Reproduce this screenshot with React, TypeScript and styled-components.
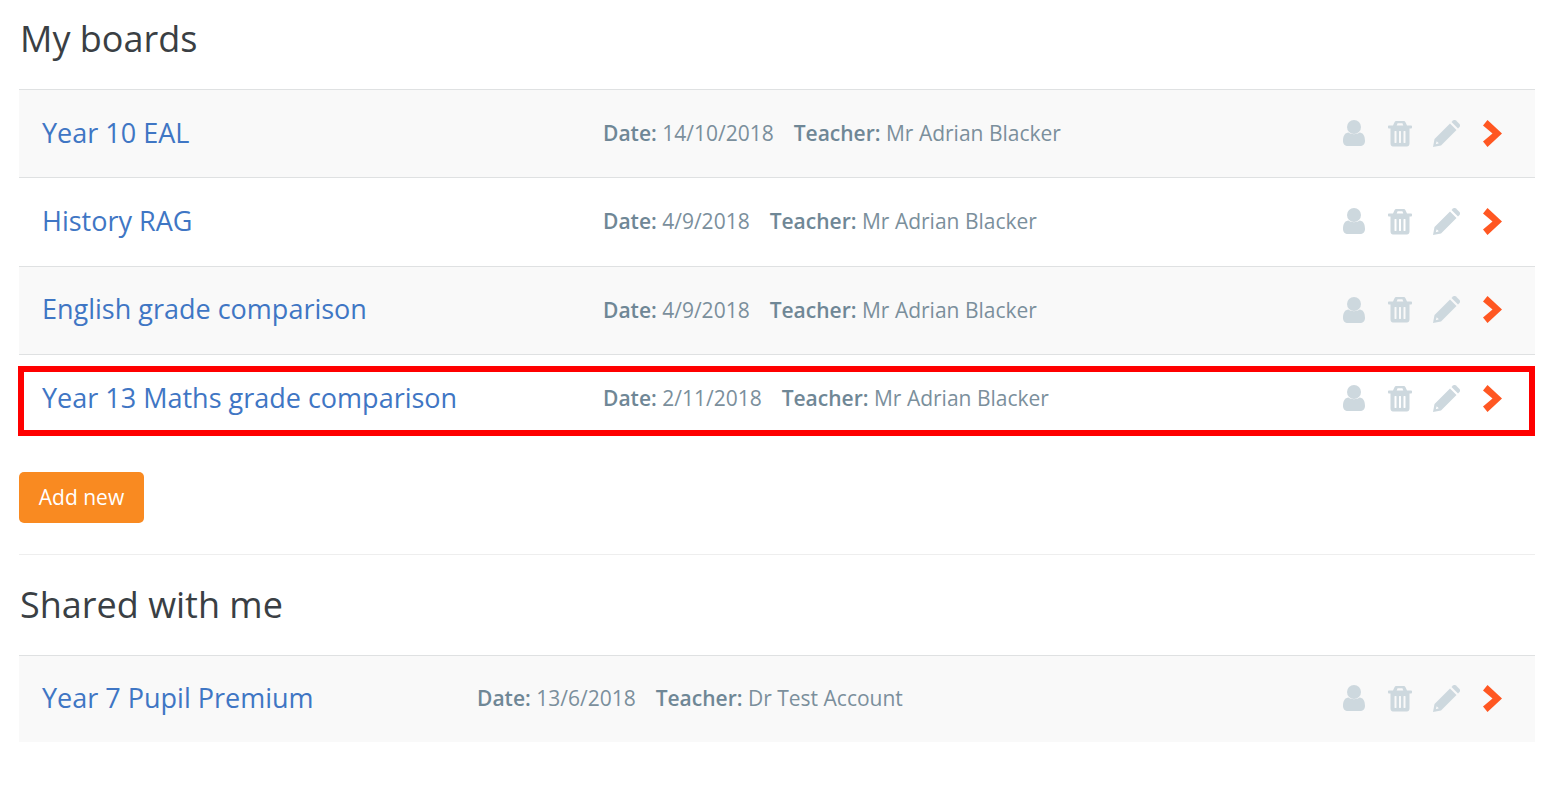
import React from "react";
import styled, { createGlobalStyle } from "styled-components";

const Global = createGlobalStyle`
  html, body { margin: 0; padding: 0; background: #fff; }
  body { font-family: "Open Sans", "Noto Sans", sans-serif; }
`;

const Page = styled.div`
  padding: 0 22px 0 19px;
  height: 792px;
  box-sizing: border-box;
  overflow: hidden;
`;

const Heading = styled.h2`
  margin: 0;
  height: 89px;
  padding-top: 16px;
  padding-left: 1px;
  box-sizing: border-box;
  font-size: 36px;
  line-height: 46px;
  font-weight: 400;
  color: #3a3f44;
`;

const Row = styled.div<{ $odd: boolean }>`
  position: relative;
  height: 88.33px;
  padding-bottom: 1px;
  display: flex;
  align-items: center;
  border-top: 1.5px solid #dfe1e2;
  box-sizing: border-box;
  background: ${(p) => (p.$odd ? "#f9f9f9" : "#fff")};

  &:last-child {
    height: 87px;
  }
`;

const Title = styled.a<{ $width: number }>`
  width: ${(p) => p.$width}px;
  flex: none;
  padding: 0 0 2px 23px;
  box-sizing: border-box;
  font-size: 27px;
  color: #3f76c4;
  white-space: nowrap;
`;

const Meta = styled.div`
  flex: 1;
  display: flex;
  gap: 20px;
  font-size: 21px;
  color: #7b8f9c;
  white-space: nowrap;
`;

const Label = styled.b`
  font-weight: 600;
  color: #6f8796;
`;

const Actions = styled.div`
  display: flex;
  width: 204px;
  padding-right: 20px;
  box-sizing: border-box;
  flex: none;
`;

const ActionIcon = styled.span<{ $go?: boolean }>`
  width: 46px;
  display: flex;
  justify-content: center;
  align-items: center;
  color: ${(p) => (p.$go ? "#ff5722" : "#cdd8de")};
`;

const Highlight = styled.div`
  position: absolute;
  left: -1px;
  right: 0;
  top: 11px;
  height: 70px;
  border: 6px solid #ff0000;
  box-sizing: border-box;
  pointer-events: none;
`;

const AddButton = styled.button`
  display: block;
  margin-top: 30px;
  width: 125px;
  height: 51px;
  border: none;
  border-radius: 5px;
  background: #f98a21;
  color: #fff;
  font-family: inherit;
  font-size: 21px;
  padding: 0 0 2px;
`;

const Rule = styled.hr`
  margin: 31px 0 10.5px;
  border: none;
  border-top: 1.5px solid #eeeeee;
`;

const User = () => (
  <svg width="22" height="26" viewBox="0 0 22 26" fill="currentColor" aria-hidden="true">
    <circle cx="11" cy="7" r="7" />
    <path d="M5.500 12.500C8 14.700 14 14.700 16.500 12.500C20 12.500 22 16 22 21C22 24 20 26 17 26H5C2 26 0 24 0 21C0 16 2 12.500 5.500 12.500Z" />
  </svg>
);

const Trash = () => (
  <svg width="24" height="27" viewBox="0 0 24 26" fill="currentColor" aria-hidden="true">
    <path
      fillRule="evenodd"
      d="M8.500 0.500h7c.9 0 1.600.5 2 1.300L19 5h4c.5 0 1 .4 1 1v1c0 .5-.5 1-1 1h-1.500v15c0 1.700-1.100 3-2.500 3H5c-1.400 0-2.500-1.300-2.500-3V8H1c-.5 0-1-.5-1-1V6c0-.6.500-1 1-1h4l1.500-3.200c.4-.8 1.100-1.300 2-1.300zM8.700 5h6.600l-.9-2.200H9.600zM7 10.500c-.3 0-.5.200-.5.500v11c0 .3.200.5.500.5h1c.3 0 .5-.2.5-.5V11c0-.3-.2-.5-.5-.5zm4.500 0c-.3 0-.5.200-.5.500v11c0 .3.200.5.500.5h1c.3 0 .5-.2.500-.5V11c0-.3-.2-.5-.5-.5zm4.500 0c-.3 0-.5.200-.5.500v11c0 .3.200.5.500.5h1c.3 0 .5-.2.500-.5V11c0-.3-.2-.5-.5-.5z"
    />
  </svg>
);

const Pencil = () => (
  <svg width="27" height="27" viewBox="0 0 27 27" fill="currentColor" aria-hidden="true">
    <path
      fillRule="evenodd"
      d="M0 27L1.500 19L17 3.500L23.500 10L8 25.500ZM3.700 21.200L2.800 24.200L5.800 23.300Z"
    />
    <path d="M18.500 2L20 .5C21-.3 22-.3 23 .5L26.500 4C27.300 5 27.300 6 26.500 7L25 8.500Z" />
  </svg>
);

const Chevron = () => (
  <svg width="19" height="27" viewBox="0 0 19 27" fill="currentColor" aria-hidden="true">
    <path d="M0 5.500L4.500 0L19 13.500L4.500 27L0 21.500L9.500 13.500Z" />
  </svg>
);

type Board = { name: string; date: string; teacher: string; marked?: boolean };

const BoardRow = ({ board, odd, width }: { board: Board; odd: boolean; width: number }) => (
  <Row $odd={odd}>
    <Title $width={width}>{board.name}</Title>
    <Meta>
      <span>
        <Label>Date:</Label> {board.date}
      </span>
      <span>
        <Label>Teacher:</Label> {board.teacher}
      </span>
    </Meta>
    <Actions>
      <ActionIcon><User /></ActionIcon>
      <ActionIcon><Trash /></ActionIcon>
      <ActionIcon><Pencil /></ActionIcon>
      <ActionIcon $go><Chevron /></ActionIcon>
    </Actions>
    {board.marked && <Highlight />}
  </Row>
);

const mine: Board[] = [
  { name: "Year 10 EAL", date: "14/10/2018", teacher: "Mr Adrian Blacker" },
  { name: "History RAG", date: "4/9/2018", teacher: "Mr Adrian Blacker" },
  { name: "English grade comparison", date: "4/9/2018", teacher: "Mr Adrian Blacker" },
  { name: "Year 13 Maths grade comparison", date: "2/11/2018", teacher: "Mr Adrian Blacker", marked: true },
];

const shared: Board[] = [{ name: "Year 7 Pupil Premium", date: "13/6/2018", teacher: "Dr Test Account" }];

export default function App() {
  return (
    <Page>
      <Global />
      <Heading>My boards</Heading>
      {mine.map((b, i) => (
        <BoardRow key={b.name} board={b} odd={i % 2 === 0} width={584} />
      ))}
      <AddButton>Add new</AddButton>
      <Rule />
      <Heading>Shared with me</Heading>
      {shared.map((b, i) => (
        <BoardRow key={b.name} board={b} odd={i % 2 === 0} width={458} />
      ))}
    </Page>
  );
}
